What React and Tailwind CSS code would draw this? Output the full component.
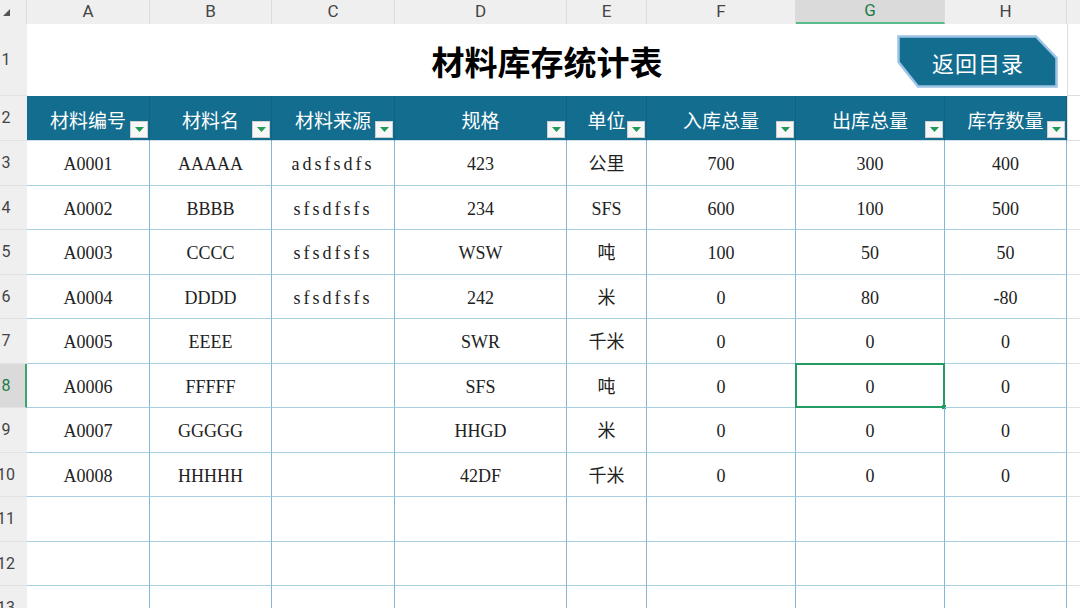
import React from "react";

const serif = { fontFamily: "'Liberation Serif', 'Noto Sans CJK SC', serif" };
const sans = { fontFamily: "Roboto, 'Noto Sans', 'Noto Sans CJK SC', sans-serif" };
const cjk = { fontFamily: "'Noto Sans CJK SC', 'Liberation Serif', serif" };

const colW = [
  "w-[123px]",
  "w-[122px]",
  "w-[123px]",
  "w-[172px]",
  "w-[80px]",
  "w-[149px]",
  "w-[149px]",
  "w-[122px]",
];
const letters = ["A", "B", "C", "D", "E", "F", "G", "H"];
const heads = ["材料编号", "材料名", "材料来源", "规格", "单位", "入库总量", "出库总量", "库存数量"];

const data = [
  ["A0001", "AAAAA", "adsfsdfs", "423", "公里", "700", "300", "400"],
  ["A0002", "BBBB", "sfsdfsfs", "234", "SFS", "600", "100", "500"],
  ["A0003", "CCCC", "sfsdfsfs", "WSW", "吨", "100", "50", "50"],
  ["A0004", "DDDD", "sfsdfsfs", "242", "米", "0", "80", "-80"],
  ["A0005", "EEEE", "", "SWR", "千米", "0", "0", "0"],
  ["A0006", "FFFFF", "", "SFS", "吨", "0", "0", "0"],
  ["A0007", "GGGGG", "", "HHGD", "米", "0", "0", "0"],
  ["A0008", "HHHHH", "", "42DF", "千米", "0", "0", "0"],
  ["", "", "", "", "", "", "", ""],
  ["", "", "", "", "", "", "", ""],
  ["", "", "", "", "", "", "", ""],
];

function RowHead({ n, sel, h }) {
  return (
    <div
      className={`${h} w-[27px] shrink-0 flex items-center border-b border-[#e2e2e2] ${
        sel ? "bg-[#dadada] border-r-2 border-r-[#3aa572] text-[#1f7a4b]" : "bg-[#efefef] text-[#444]"
      }`}
    >
      <span className="w-[12px] text-center text-[16px] leading-none whitespace-nowrap flex justify-center" style={sans}>
        {n}
      </span>
    </div>
  );
}

function Dropdown() {
  return (
    <div className="absolute right-[1px] bottom-[2px] w-[18px] h-[17px] bg-[#f7f7f7] border border-[#cfcfcf] flex items-center justify-center">
      <svg width="9" height="5" viewBox="0 0 9 5">
        <polygon points="0,0 9,0 4.5,5" fill="#1f9a5a" />
      </svg>
    </div>
  );
}

export default function App() {
  return (
    <div className="w-[1080px] h-[608px] overflow-hidden bg-white relative select-none">
      {/* column letters */}
      <div className="flex h-[24px] bg-[#efefef]">
        <div className="w-[27px] shrink-0 flex items-center pl-[3px] border-r border-[#dcdcdc]">
          <svg width="7" height="7" viewBox="0 0 7 7">
            <polygon points="7,0 7,7 0,7" fill="#555" />
          </svg>
        </div>
        {letters.map((l, i) => (
          <div
            key={l}
            className={`${colW[i]} shrink-0 flex items-center justify-center text-[17px] border-r border-[#dcdcdc] ${
              l === "G" ? "bg-[#dadada] text-[#1f7a4b] border-b-2 border-b-[#5cbb8a]" : "text-[#444]"
            }`}
            style={sans}
          >
            {l}
          </div>
        ))}
        <div className="flex-1" />
      </div>

      {/* row 1 */}
      <div className="flex h-[72px]">
        <RowHead n="1" h="h-[72px]" />
        <div className="w-[1040px] shrink-0 flex items-center justify-center pt-[4px]">
          <span className="text-[33px] font-bold text-black" style={cjk}>
            材料库存统计表
          </span>
        </div>
        <div className="flex-1 border-l border-[#dedede] border-b border-b-[#dedede]" />
      </div>

      {/* row 2 header */}
      <div className="flex h-[45px]">
        <RowHead n="2" h="h-[45px]" />
        {heads.map((t, i) => (
          <div
            key={t}
            className={`${colW[i]} shrink-0 relative bg-[#136d8f] border-r border-[#0f6283] border-b border-b-[#cfe0ea] flex items-center justify-center pt-[3px]`}
          >
            <span className="text-[19px] text-white leading-none" style={cjk}>
              {t}
            </span>
            <Dropdown />
          </div>
        ))}
        <div className="flex-1 border-l border-[#dedede] border-b border-b-[#dedede]" />
      </div>

      {/* data rows */}
      {data.map((r, ri) => {
        const n = ri + 3;
        const sel = n === 8;
        const h = ri % 2 === 0 ? "h-[45px]" : "h-[44px]";
        return (
          <div key={n} className={`flex ${h}`}>
            <RowHead n={String(n)} sel={sel} h={h} />
            {r.map((c, ci) => {
              const selected = sel && ci === 6;
              return (
                <div
                  key={ci}
                  className={`${colW[ci]} shrink-0 relative flex items-center justify-center pt-[3px] border-r border-[#86b7d3] border-b border-b-[#a9cde1] text-[18px] text-[#222] ${
                    ci === 2 ? "tracking-[3px]" : ""
                  }`}
                  style={serif}
                >
                  {c}
                  {selected && (
                    <div className="absolute left-[-1px] top-[-1px] right-[-1px] bottom-[-1px] border-2 border-[#239b62]">
                      <div className="absolute right-[-3px] bottom-[-3px] w-[4px] h-[4px] bg-[#239b62]" />
                    </div>
                  )}
                </div>
              );
            })}
            <div className="flex-1 border-b border-[#e2e2e2]" />
          </div>
        );
      })}

      {/* floating button shape */}
      <div className="absolute left-[897px] top-[35px] w-[161px] h-[53px]">
        <svg className="absolute inset-0" width="161" height="53" viewBox="0 0 161 53">
          <polygon
            points="1.5,1.5 139,1.5 159.5,23 159.5,51.5 21,51.5 1.5,27"
            fill="#136d8f"
            stroke="#9cc4e6"
            strokeWidth="2.5"
          />
        </svg>
        <div className="absolute inset-0 flex items-center justify-center pl-[1px]">
          <span className="text-[22px] text-white leading-none tracking-[1px]" style={cjk}>
            返回目录
          </span>
        </div>
      </div>
    </div>
  );
}
